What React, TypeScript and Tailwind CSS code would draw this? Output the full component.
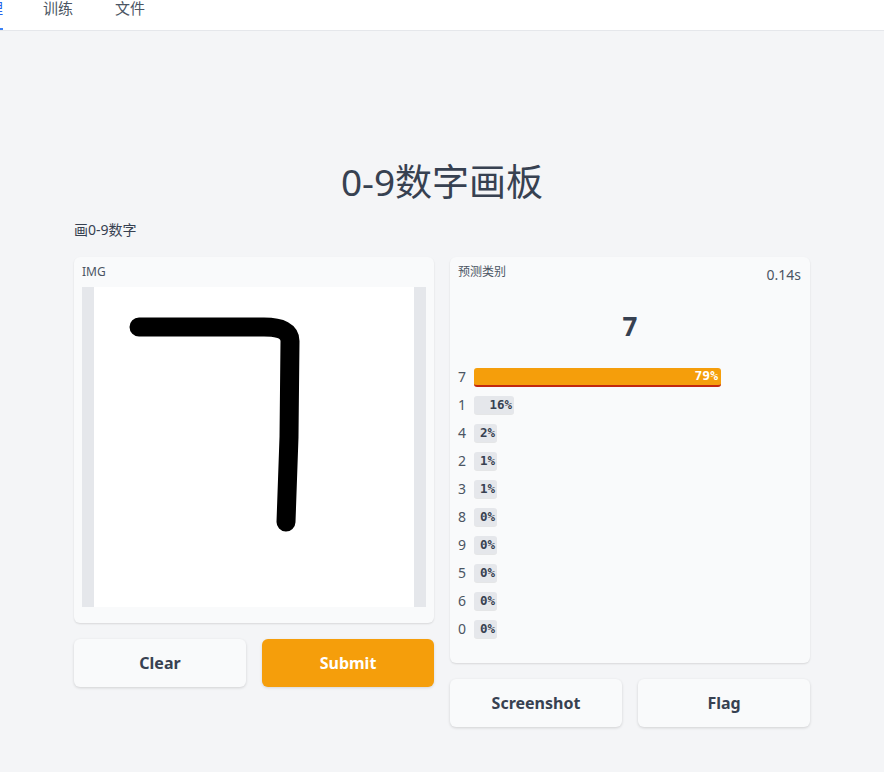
import React from "react";

const sans = { fontFamily: '"Noto Sans", "Noto Sans CJK SC", sans-serif' };
const mono = { fontFamily: '"DejaVu Sans Mono", "Liberation Mono", monospace' };

const rows: { label: string; pct: string; width: number; top?: boolean }[] = [
  { label: "7", pct: "79%", width: 247, top: true },
  { label: "1", pct: "16%", width: 40 },
  { label: "4", pct: "2%", width: 23 },
  { label: "2", pct: "1%", width: 23 },
  { label: "3", pct: "1%", width: 23 },
  { label: "8", pct: "0%", width: 23 },
  { label: "9", pct: "0%", width: 23 },
  { label: "5", pct: "0%", width: 23 },
  { label: "6", pct: "0%", width: 23 },
  { label: "0", pct: "0%", width: 23 },
];

function Sketch() {
  return (
    <svg width="320" height="320" viewBox="0 0 320 320" className="block">
      <path
        d="M45 40 L170 40 Q196 40 196 54 L195 150 L192 235"
        fill="none"
        stroke="#000"
        strokeWidth="19"
        strokeLinecap="round"
        strokeLinejoin="round"
      />
    </svg>
  );
}

function Button({ children, primary }: { children: React.ReactNode; primary?: boolean }) {
  return (
    <button
      className={
        primary
          ? "h-12 flex-1 rounded-md bg-[#f59e0b] text-[16px] font-bold text-white shadow-[0_1px_3px_rgba(0,0,0,0.12)]"
          : "h-12 flex-1 rounded-md bg-[#f9fafb] text-[16px] font-bold text-[#374151] shadow-[0_1px_3px_rgba(0,0,0,0.15)]"
      }
    >
      {children}
    </button>
  );
}

export default function App() {
  return (
    <div className="min-h-[772px] w-full overflow-hidden bg-[#f4f5f7] text-[#374151]" style={sans}>
      <div className="h-[31px] border-b border-[#e5e7eb] bg-white">
        <div className="flex items-start text-[15px] leading-[17px] text-[#4b5563]">
          <div className="relative ml-[-27px] h-[30px] w-[30px]">
            <span className="block text-[#2563eb]">推理</span>
            <div className="absolute bottom-0 left-0 h-[2px] w-[30px] bg-[#3b82f6]" />
          </div>
          <span className="ml-[40px]">训练</span>
          <span className="ml-[42px]">文件</span>
        </div>
      </div>

      <div className="mx-auto w-[736px]">
        <h1 className="pt-[129px] text-center text-[37px] leading-[44px] text-[#374151]">0-9数字画板</h1>
        <p className="mt-[17px] text-[14px] leading-[18px]">画0-9数字</p>

        <div className="mt-[18px] flex gap-4 items-start">
          <div className="flex w-[360px] flex-col gap-4">
            <div className="rounded-md bg-[#f9fafb] px-2 pt-[6px] pb-4 shadow-[0_1px_2px_rgba(0,0,0,0.12)]">
              <div className="text-[12px] leading-[18px] text-[#4b5563]">IMG</div>
              <div className="mt-[6px] flex h-[320px] justify-center bg-[#e5e7eb]">
                <div className="h-[320px] w-[320px] bg-white">
                  <Sketch />
                </div>
              </div>
            </div>
            <div className="flex gap-4">
              <Button>Clear</Button>
              <Button primary>Submit</Button>
            </div>
          </div>

          <div className="flex w-[360px] flex-col gap-4">
            <div className="h-[406px] rounded-md bg-[#f9fafb] px-2 pt-[6px] shadow-[0_1px_2px_rgba(0,0,0,0.12)]">
              <div className="flex items-start justify-between">
                <span className="text-[12px] leading-[18px] text-[#4b5563]">预测类别</span>
                <span className="mr-[1px] mt-[3px] text-[14px] leading-[18px] text-[#4b5563]">0.14s</span>
              </div>
              <div className="mt-[27px] text-center text-[26px] font-bold leading-[30px] text-[#374151]">7</div>
              <div className="mt-[27px] flex flex-col gap-[10px]">
                {rows.map((r) => (
                  <div key={r.label} className="flex h-[18px] items-center">
                    <span className="w-4 text-[14px] leading-[18px] text-[#4b5563]">{r.label}</span>
                    <div
                      className={
                        r.top
                          ? "flex h-[19px] items-center justify-end rounded-[3px] border-b-2 border-[#c2280f] bg-[#f59e0b] pr-[3px] text-[13px] font-bold text-white"
                          : "flex h-[18px] items-center justify-end rounded-[3px] bg-[#e5e7eb] pr-[2px] text-[12.5px] font-semibold text-[#374151] shadow-[0_1px_0_rgba(0,0,0,0.08)]"
                      }
                      style={{ ...mono, width: r.width }}
                    >
                      {r.pct}
                    </div>
                  </div>
                ))}
              </div>
            </div>
            <div className="flex gap-4">
              <Button>Screenshot</Button>
              <Button>Flag</Button>
            </div>
          </div>
        </div>
      </div>
    </div>
  );
}
